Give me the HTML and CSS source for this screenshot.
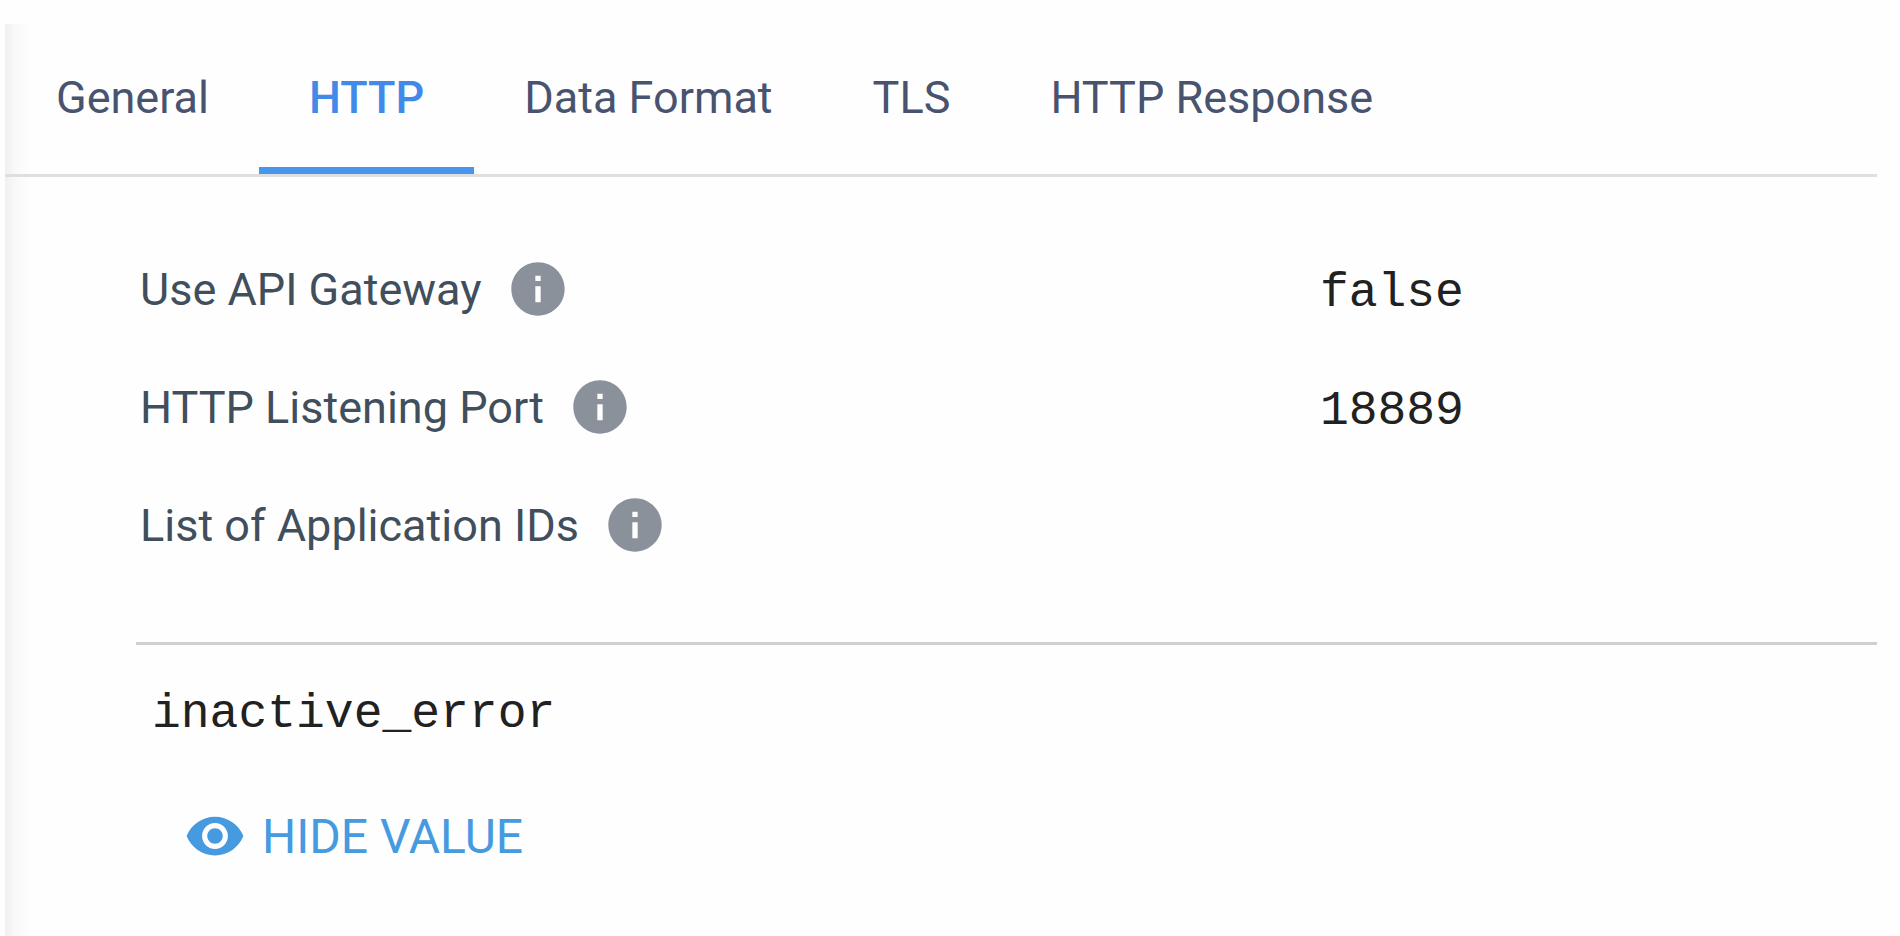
FILE: index.html
```html
<!DOCTYPE html>
<html lang="en">
<head>
<meta charset="utf-8">
<title>HTTP configuration</title>
<link rel="stylesheet" href="styles.css">
</head>
<body>
<svg class="sprite" aria-hidden="true">
  <symbol id="info" viewBox="0 0 24 24"><path d="M12 2C6.48 2 2 6.48 2 12s4.480 10 10 10 10-4.480 10-10S17.520 2 12 2zm1 15h-2v-6h2v6zm0-8h-2V7h2v2z"/></symbol>
  <symbol id="eye" viewBox="0 0 24 24"><path d="M12 4.500C7 4.500 2.730 7.610 1 12c1.730 4.390 6 7.500 11 7.500s9.270-3.110 11-7.500c-1.730-4.390-6-7.500-11-7.500zM12 17c-2.760 0-5-2.240-5-5s2.240-5 5-5 5 2.240 5 5-2.240 5-5 5zm0-8c-1.660 0-3 1.340-3 3s1.340 3 3 3 3-1.340 3-3-1.340-3-3-3z"/></symbol>
</svg>
<main class="panel">
  <nav class="tabs" role="tablist">
    <button class="tab" role="tab" aria-selected="false">General</button>
    <button class="tab tab-active" role="tab" aria-selected="true">HTTP</button>
    <button class="tab" role="tab" aria-selected="false">Data Format</button>
    <button class="tab" role="tab" aria-selected="false">TLS</button>
    <button class="tab" role="tab" aria-selected="false">HTTP Response</button>
  </nav>
  <section class="content">
    <dl class="fields">
      <div class="field">
        <dt class="label">Use API Gateway <button class="info" aria-label="About Use API Gateway"><svg class="icon"><use href="#info"/></svg></button></dt>
        <dd class="value">false</dd>
      </div>
      <div class="field">
        <dt class="label">HTTP Listening Port <button class="info" aria-label="About HTTP Listening Port"><svg class="icon"><use href="#info"/></svg></button></dt>
        <dd class="value">18889</dd>
      </div>
      <div class="field">
        <dt class="label">List of Application IDs <button class="info" aria-label="About List of Application IDs"><svg class="icon"><use href="#info"/></svg></button></dt>
        <dd class="value"></dd>
      </div>
    </dl>
    <div class="secret">
      <div class="secret-value">inactive_error</div>
      <button class="toggle"><svg class="icon icon-eye"><use href="#eye"/></svg>HIDE VALUE</button>
    </div>
  </section>
</main>
</body>
</html>
```
FILE: styles.css
```css
* {
  box-sizing: border-box;
}

body {
  margin: 0;
  background: #fefefe;
  font-family: Roboto, "Liberation Sans", sans-serif;
  font-size: 45px;
}

button {
  border: 0;
  padding: 0;
  background: none;
  font: inherit;
  cursor: pointer;
}

.sprite {
  display: none;
}

.panel {
  min-height: calc(100vh - 24px);
  margin: 24px 23px 0 5px;
  background: linear-gradient(to right, #f0f0f0, #f9f9f9 10px, #fefefe 28px);
}

.tabs {
  display: flex;
  height: 153px;
  padding-left: 1px;
  border-bottom: 3px solid #dfdfdf;
}

.tab {
  padding: 3px 50px 0;
  border-bottom: 7px solid transparent;
  color: #48536f;
  white-space: nowrap;
}

.tab-active {
  border-bottom-color: #4795ec;
  color: #428aea;
  font-weight: 500;
}

.content {
  padding: 53px 0 0 131px;
}

.fields {
  margin: 0;
  padding-bottom: 58px;
  border-bottom: 3px solid #d0d0d0;
}

.field {
  display: grid;
  grid-template-columns: 68fr 32fr;
  align-items: center;
  height: 118px;
}

.label {
  display: flex;
  align-items: center;
  gap: 24px;
  padding-left: 4px;
  color: #414e5c;
}

.value {
  margin: 0;
  padding-top: 8px;
}

.value,
.secret-value {
  color: #212121;
  font-family: "Liberation Mono", monospace;
  font-size: 48px;
}

.info {
  display: flex;
  color: #8b919b;
}

.icon {
  width: 64px;
  height: 64px;
  fill: currentColor;
}

.icon-eye {
  width: 62px;
  height: 62px;
}

.secret {
  padding: 42px 16px;
}

.toggle {
  display: flex;
  align-items: center;
  gap: 16px;
  margin: 64px 0 0 32px;
  color: #459ae0;
  font-size: 48px;
}
```
